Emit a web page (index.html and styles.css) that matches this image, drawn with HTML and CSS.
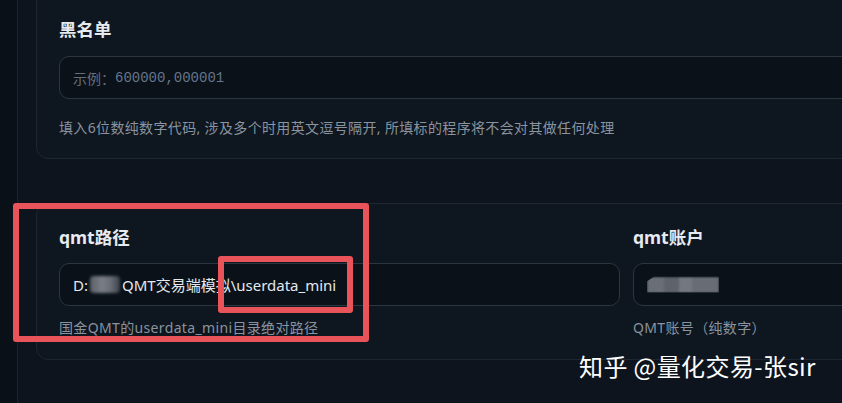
FILE: index.html
```html
<!DOCTYPE html>
<html lang="zh-CN">
<head>
<meta charset="utf-8">
<title>设置</title>
<link rel="stylesheet" href="styles.css">
</head>
<body>
<div class="app">
  <aside class="rail"></aside>
  <main class="content">
    <section class="card card-black">
      <h3 class="label">黑名单</h3>
      <div class="input"><span class="ph-cn">示例：</span><span class="ph-num">600000,000001</span></div>
      <p class="help help-black">填入6位数纯数字代码, 涉及多个时用英文逗号隔开, 所填标的程序将不会对其做任何处理</p>
    </section>
    <section class="card card-qmt">
      <div class="field">
        <h3 class="label">qmt路径</h3>
        <div class="input"><span class="val">D:<span class="blur-inline"></span>QMT交易端模拟\userdata_mini</span></div>
        <p class="help">国金QMT的userdata_mini目录绝对路径</p>
      </div>
      <div class="field">
        <h3 class="label">qmt账户</h3>
        <div class="input"><span class="blur-block"></span></div>
        <p class="help">QMT账号（纯数字）</p>
      </div>
    </section>
  </main>
</div>
<div class="mark mark-outer"></div>
<div class="mark mark-inner"></div>
<div class="watermark">知乎 @量化交易-张sir</div>
</body>
</html>
```
FILE: styles.css
```css
html, body {
  margin: 0;
  padding: 0;
}
body {
  width: 842px;
  height: 403px;
  overflow: hidden;
  background: #0d141e;
  font-family: "Noto Sans", "Noto Sans CJK SC", sans-serif;
  position: relative;
}
.app {
  display: flex;
  width: 1300px;
  min-height: 403px;
}
.rail {
  width: 17px;
  flex: none;
  background: #0a1018;
  border-right: 1px solid #1a222d;
}
.content {
  padding-left: 18px;
  flex: 1;
}
.card {
  border: 1px solid #1d2631;
  border-radius: 12px;
  background: #0e1620;
  padding-left: 22px;
  padding-right: 22px;
}
.card-black {
  margin-top: -20px;
  padding-top: 36px;
  padding-bottom: 20px;
}
.card-qmt {
  margin-top: 44px;
  padding-top: 21px;
  padding-bottom: 21px;
  display: grid;
  grid-template-columns: 561px 561px;
  column-gap: 13px;
}
.label {
  margin: 0 0 15px;
  font-size: 17.5px;
  line-height: 24px;
  font-weight: 700;
  color: #e7eaee;
}
.card-qmt .label {
  margin-bottom: 14px;
}
.input {
  box-sizing: border-box;
  height: 43px;
  border: 1px solid #2c3641;
  border-radius: 10px;
  background: #0a1119;
  padding: 0 13px;
  display: flex;
  align-items: center;
  font-size: 14px;
}
.ph-cn {
  color: #666e79;
  font-family: "Noto Sans CJK SC", sans-serif;
}
.ph-num {
  color: #66758b;
  font-family: "Liberation Mono", "DejaVu Sans Mono", monospace;
}
.val {
  color: #e4e8ed;
  display: flex;
  align-items: center;
  white-space: pre;
  font-size: 15px;
}
.blur-inline {
  display: inline-block;
  width: 30px;
  height: 17px;
  margin: 0 2px 0 2px;
  background: linear-gradient(90deg, #5b6069, #7a7e86 40%, #686c74 70%, #3b4049);
  filter: blur(1.5px);
  border-radius: 4px;
}
.blur-block {
  display: block;
  width: 72px;
  height: 16px;
  background: linear-gradient(90deg, #6a6e77 0 24%, #5d626b 24% 45%, #73777f 45% 62%, #686c75 62% 100%);
  filter: blur(1px);
  clip-path: polygon(10% 0, 100% 0, 100% 100%, 0 100%, 0 30%);
}
.help {
  margin: 12px 0 0;
  font-size: 14px;
  line-height: 20px;
  color: #8a939e;
  letter-spacing: 0.35px;
}
.help-black {
  margin-top: 19px;
}
.mark {
  position: absolute;
  border: 6px solid #e9545a;
  border-radius: 3px;
}
.mark-outer {
  left: 13px;
  top: 203px;
  width: 344px;
  height: 127px;
}
.mark-inner {
  left: 218px;
  top: 256px;
  width: 123px;
  height: 45px;
}
.watermark {
  position: absolute;
  left: 579px;
  top: 350px;
  font-family: "Noto Sans CJK SC", sans-serif;
  font-size: 24px;
  letter-spacing: 0.4px;
  line-height: 32px;
  color: #ffffff;
  white-space: nowrap;
}
```
